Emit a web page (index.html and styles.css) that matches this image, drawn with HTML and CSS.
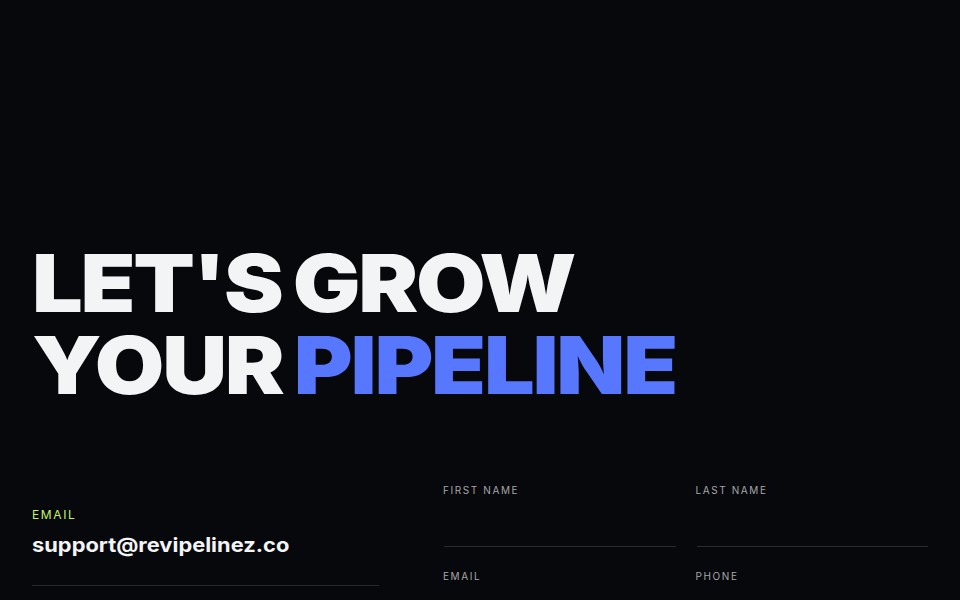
FILE: index.html
```html
<!DOCTYPE html>
<html lang="en">
<head>
<meta charset="utf-8">
<title>Contact</title>
<link rel="stylesheet" href="styles.css">
</head>
<body>
<main class="page">
  <h1 class="headline">
    <span class="line">LET'S GROW</span>
    <span class="line">YOUR <span class="accent">PIPELINE</span></span>
  </h1>
  <section class="contact">
    <div class="info">
      <div class="info-label">EMAIL</div>
      <div class="info-value">support@revipelinez.co</div>
      <div class="info-rule"></div>
    </div>
    <form class="form">
      <label class="field">
        <span class="field-label">FIRST NAME</span>
        <span class="field-input"></span>
      </label>
      <label class="field">
        <span class="field-label">LAST NAME</span>
        <span class="field-input"></span>
      </label>
      <label class="field">
        <span class="field-label">EMAIL</span>
        <span class="field-input"></span>
      </label>
      <label class="field">
        <span class="field-label">PHONE</span>
        <span class="field-input"></span>
      </label>
    </form>
  </section>
</main>
</body>
</html>
```

FILE: styles.css
```css
* { box-sizing: border-box; }
html, body {
  margin: 0;
  padding: 0;
  background: #07080b;
  color: #f3f4f6;
  font-family: Inter, "Liberation Sans", sans-serif;
  overflow: hidden;
}
.page {
  width: 960px;
  height: 600px;
  padding: 0 32px;
}
.headline {
  margin: 0;
  padding-top: 242px;
  font-family: Inter, sans-serif;
  font-weight: 900;
  font-size: 80px;
  line-height: 82px;
  letter-spacing: -2px;
  word-spacing: -4px;
  color: #f3f4f6;
}
.line {
  display: block;
  width: max-content;
  transform: scaleX(1.123);
  transform-origin: left center;
}
.accent { color: #5877ff; }
.contact {
  display: grid;
  grid-template-columns: 347px 1fr;
  column-gap: 64px;
  margin-top: 77px;
}
.info { padding-top: 24px; }
.info-label {
  font-size: 12px;
  letter-spacing: 1.6px;
  color: #c5f26a;
  line-height: 16px;
}
.info-value {
  margin-top: 10px;
  font-size: 20px;
  font-weight: 700;
  line-height: 24px;
  width: max-content;
  transform: scaleX(1.093);
  transform-origin: left center;
}
.info-rule {
  margin-top: 28px;
  height: 1px;
  background: #26272c;
}
.form {
  display: grid;
  grid-template-columns: 1fr 1fr;
  column-gap: 20px;
  row-gap: 22px;
  margin: 0;
}
.field { display: flex; flex-direction: column; }
.field-label {
  font-size: 10px;
  letter-spacing: 1.6px;
  color: #a6a6a8;
  line-height: 14px;
}
.field-input {
  height: 50px;
  border-bottom: 1px solid #2a2b30;
  margin-left: 1px;
}
```
